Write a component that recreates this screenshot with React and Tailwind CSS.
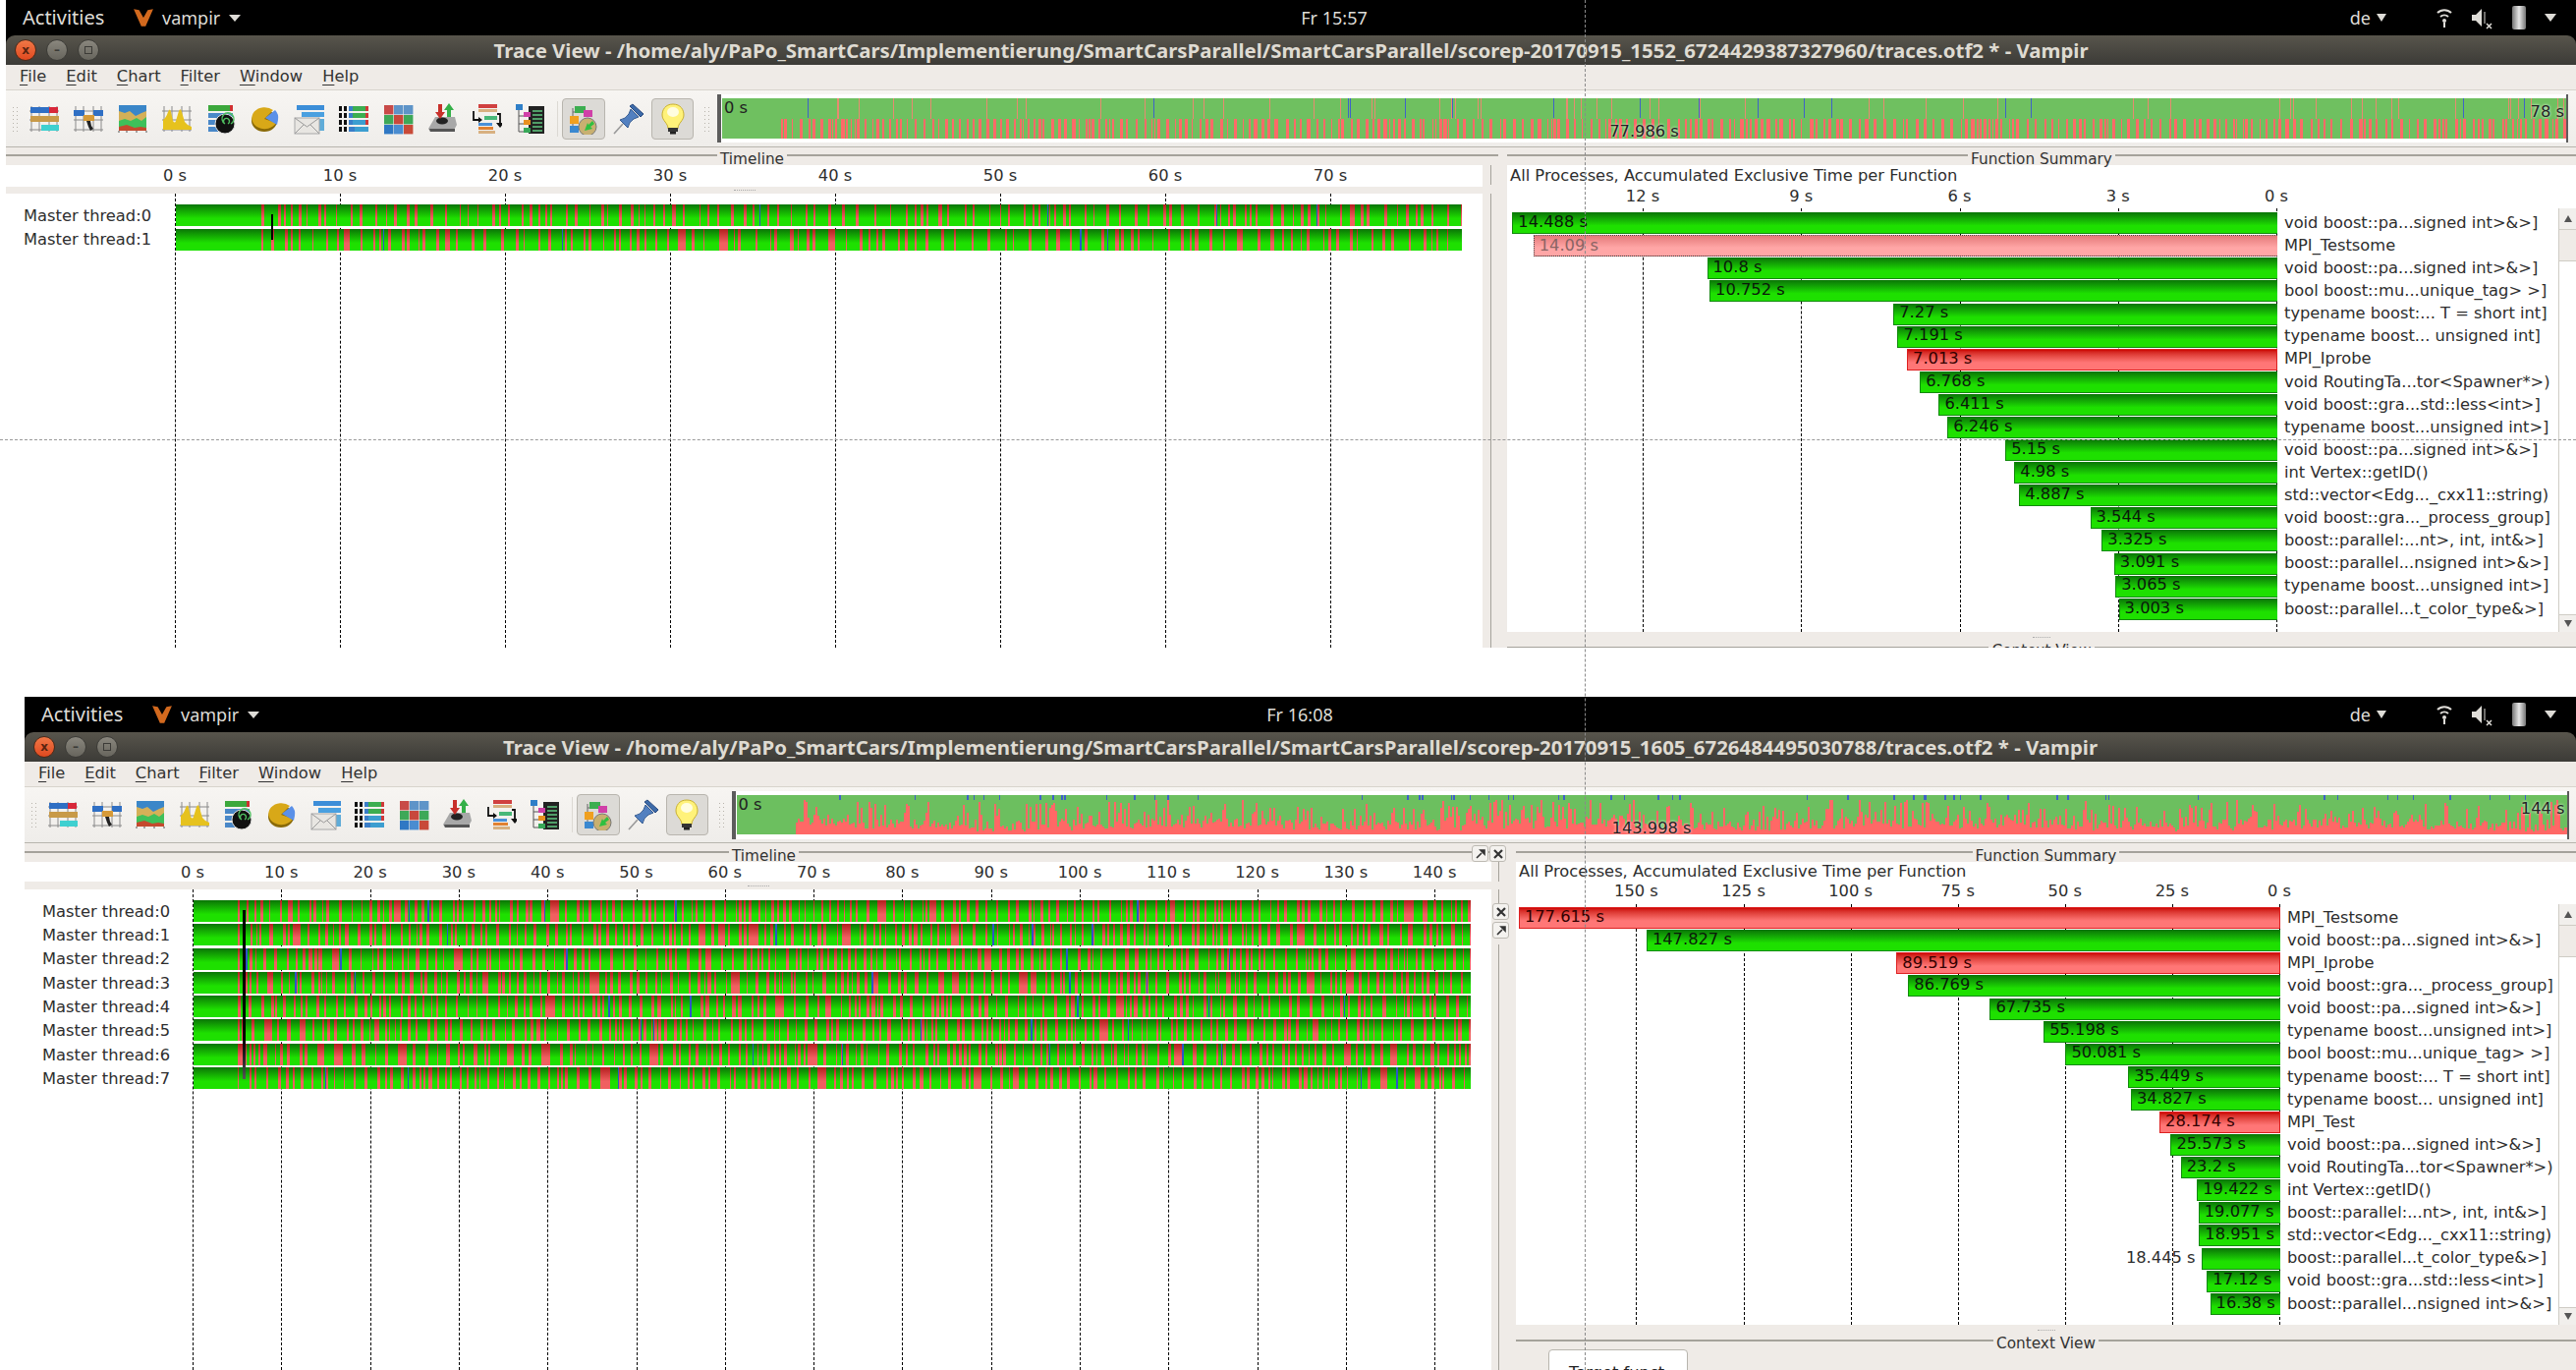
import React from "react";

const rng = (seed) => () => {
  seed = (seed + 0x6d2b79f5) | 0;
  let t = Math.imul(seed ^ (seed >>> 15), 1 | seed);
  t = (t + Math.imul(t ^ (t >>> 7), 61 | t)) ^ t;
  return ((t ^ (t >>> 14)) >>> 0) / 4294967296;
};

const ROWS1 = [
  [14.488, "g", "void boost::pa...signed int>&>]"],
  [14.09, "p", "MPI_Testsome"],
  [10.8, "g", "void boost::pa...signed int>&>]"],
  [10.752, "g", "bool boost::mu...unique_tag> >]"],
  [7.27, "g", "typename boost:... T = short int]"],
  [7.191, "g", "typename boost... unsigned int]"],
  [7.013, "r", "MPI_Iprobe"],
  [6.768, "g", "void RoutingTa...tor<Spawner*>)"],
  [6.411, "g", "void boost::gra...std::less<int>]"],
  [6.246, "g", "typename boost...unsigned int>]"],
  [5.15, "g", "void boost::pa...signed int>&>]"],
  [4.98, "g", "int Vertex::getID()"],
  [4.887, "g", "std::vector<Edg..._cxx11::string)"],
  [3.544, "g", "void boost::gra..._process_group]"],
  [3.325, "g", "boost::parallel:...nt>, int, int&>]"],
  [3.091, "g", "boost::parallel...nsigned int>&>]"],
  [3.065, "g", "typename boost...unsigned int>]"],
  [3.003, "g", "boost::parallel...t_color_type&>]"],
];
const ROWS2 = [
  [177.615, "r", "MPI_Testsome"],
  [147.827, "g", "void boost::pa...signed int>&>]"],
  [89.519, "r", "MPI_Iprobe"],
  [86.769, "g", "void boost::gra..._process_group]"],
  [67.735, "g", "void boost::pa...signed int>&>]"],
  [55.198, "g", "typename boost...unsigned int>]"],
  [50.081, "g", "bool boost::mu...unique_tag> >]"],
  [35.449, "g", "typename boost:... T = short int]"],
  [34.827, "g", "typename boost... unsigned int]"],
  [28.174, "r", "MPI_Test"],
  [25.573, "g", "void boost::pa...signed int>&>]"],
  [23.2, "g", "void RoutingTa...tor<Spawner*>)"],
  [19.422, "g", "int Vertex::getID()"],
  [19.077, "g", "boost::parallel:...nt>, int, int&>]"],
  [18.951, "g", "std::vector<Edg..._cxx11::string)"],
  [18.445, "o", "boost::parallel...t_color_type&>]"],
  [17.12, "g", "void boost::gra...std::less<int>]"],
  [16.38, "g", "boost::parallel...nsigned int>&>]"],
];

const BAR = {
  g: "bg-linear-to-b from-[#0a7506] via-[#1ee000] via-65% to-[#1ee000] border-l border-b border-[#128a0c] text-[#0a1a0a]",
  o: "bg-linear-to-b from-[#0a7506] via-[#1ee000] via-65% to-[#1ee000] border-l border-b border-[#128a0c]",
  r: "bg-linear-to-b from-[#cc0000] via-[#ff7676] via-65% to-[#ff7676] border border-[#dd2020] text-[#300]",
  p: "bg-linear-to-b from-[#e47a7a] via-[#ffa6a6] via-60% to-[#ffa6a6] border-y border-l border-dotted border-[#444] text-[#8a6464]",
};

function TimelineBar({ seed, width, start, dense, id }) {
  const r = rng(seed);
  const items = [];
  let x = start;
  while (x < width) {
    const big = r() < (dense ? 0.05 : 0.02);
    const w = big ? 4 + r() * 6 : 1.2 + r() * 2.2;
    items.push([x, w]);
    x += w + (dense ? 1.5 + r() * 9 : 2.5 + r() * 13);
  }
  const blues = [];
  for (let i = 0; i < width / (dense ? 280 : 380); i++) blues.push(start * 0.6 + r() * (width - start));
  return (
    <svg width={width} height="22" className="block" shapeRendering="crispEdges">
      <defs>
        <linearGradient id={`g${id}`} x1="0" y1="0" x2="0" y2="1">
          <stop offset="0" stopColor="#0a7506" />
          <stop offset="0.65" stopColor="#1ee000" />
          <stop offset="1" stopColor="#1ee000" />
        </linearGradient>
        <linearGradient id={`r${id}`} x1="0" y1="0" x2="0" y2="1">
          <stop offset="0" stopColor="#b41e1e" />
          <stop offset="0.65" stopColor="#f06060" />
          <stop offset="1" stopColor="#f06060" />
        </linearGradient>
      </defs>
      <rect width={width} height="22" fill={`url(#g${id})`} />
      {items.map(([a, w], i) => (
        <rect key={i} x={a} width={w} height="22" fill={`url(#r${id})`} />
      ))}
      {blues.map((a, i) => (
        <rect key={i} x={a} width="1.5" height="22" fill="#2d55c8" />
      ))}
    </svg>
  );
}

function OverviewOne() {
  const r = rng(77);
  const width = 1877;
  const low = [];
  let x = 60;
  while (x < width) {
    const w = 1 + r() * 2.6;
    low.push([x, w]);
    x += w + 1 + r() * 7;
  }
  const up = [];
  for (let i = 0; i < 60; i++) up.push(70 + r() * (width - 70));
  const blue = [];
  for (let i = 0; i < 16; i++) blue.push(60 + r() * (width - 70));
  return (
    <svg width={width} height="41" className="block" shapeRendering="crispEdges">
      <rect width={width} height="41" fill="#6fc060" />
      {low.map(([a, w], i) => (
        <rect key={i} x={a} y="21" width={w} height="20" fill="#ff6a68" />
      ))}
      {up.map((a, i) => (
        <rect key={i} x={a} y="0" width="1" height="21" fill="#e88a70" />
      ))}
      {blue.map((a, i) => (
        <rect key={i} x={a} y="0" width="1" height="20" fill="#3f62c8" />
      ))}
    </svg>
  );
}

function OverviewTwo() {
  const r = rng(5150);
  const width = 1863;
  const bars = [];
  for (let x = 60; x < width; x += 2) {
    const n = r();
    const h = 3 + r() * 11 + (n > 0.62 ? r() * 24 : 0) + (Math.sin(x / 61) + 1) * 1.5;
    bars.push([x, Math.min(h, 35)]);
  }
  const blue = [];
  for (let i = 0; i < 60; i++) blue.push(30 + r() * (width - 40));
  return (
    <svg width={width} height="40" className="block" shapeRendering="crispEdges">
      <rect width={width} height="40" fill="#6cbf5f" />
      {bars.map(([a, h], i) => (
        <rect key={i} x={a} y={40 - h} width="2" height={h} fill="#ff6866" />
      ))}
      {blue.map((a, i) => (
        <rect key={i} x={a} y="0" width="1.5" height="5" fill="#3e60c8" />
      ))}
    </svg>
  );
}

const Grid = () => (
  <g stroke="#8a8a8a" strokeWidth="1" fill="none">
    <path d="M3 3V29M11 3V29M21 3V29M29 3V29M1 27H31M1 8H31M1 17H31" />
  </g>
);
const ic = "w-[32px] h-[32px] shrink-0 blur-[0.4px]";

function Icon1() {
  return (
    <svg viewBox="0 0 32 32" className={ic}>
      <Grid />
      <rect x="2" y="4" width="22" height="6" fill="#2f6fc4" />
      <rect x="21" y="4" width="9" height="6" fill="#d8283a" />
      <rect x="2" y="13" width="29" height="6" fill="#c89a48" />
      <rect x="13" y="22" width="18" height="6" fill="#3fd0d0" />
    </svg>
  );
}
function Icon2() {
  return (
    <svg viewBox="0 0 32 32" className={ic}>
      <Grid />
      <rect x="1" y="7" width="11" height="6" fill="#2f6fc4" />
      <rect x="21" y="7" width="10" height="6" fill="#2f6fc4" />
      <rect x="11" y="12" width="11" height="6" fill="#d69a38" />
      <path d="M14 18l4 0 1 5 2 3-3 2-2-4z" fill="#222" />
    </svg>
  );
}
function Icon3() {
  return (
    <svg viewBox="0 0 32 32" className={ic}>
      <rect x="2" y="2" width="28" height="26" fill="#3a86c8" />
      <path d="M2 8l6 2 5-2 6 5 6-3 5-2v20H2z" fill="#d4b058" />
      <path d="M2 18l6-2 6 2 6-3 5 3 5-4v14H2z" fill="#3ec05a" />
      <path d="M2 24l8-2 8 3 6-1 6 1v3H2z" fill="#c44a2e" />
      <path d="M2 28v2M10 28v2M20 28v2M30 28v2" stroke="#555" />
    </svg>
  );
}
function Icon4() {
  return (
    <svg viewBox="0 0 32 32" className={ic}>
      <Grid />
      <path d="M2 27V17q3-2 5-8 2-5 3 0l2 9q2 3 3 0l3-10q2-4 3 1l3 10q3 4 7 5v3z" fill="#e6c21e" />
    </svg>
  );
}
function Icon5() {
  return (
    <svg viewBox="0 0 32 32" className={ic}>
      <rect x="3" y="2" width="25" height="6" fill="#3ca83c" />
      <rect x="25" y="2" width="3" height="6" fill="#d03030" />
      <rect x="3" y="10" width="25" height="5" fill="#4a88c8" />
      <rect x="3" y="17" width="12" height="5" fill="#4a88c8" />
      <rect x="3" y="24" width="10" height="5" fill="#4a88c8" />
      <circle cx="20" cy="21" r="10" fill="#111" stroke="#ddd" strokeWidth="1" />
      <path d="M20 21A6 6 0 1 1 26 21M20 21A3 3 0 1 1 23 21" stroke="#4fbf60" fill="none" strokeWidth="1.4" />
    </svg>
  );
}
function Icon6() {
  return (
    <svg viewBox="0 0 32 32" className={ic}>
      <ellipse cx="15" cy="18" rx="13" ry="11" fill="#8a6a08" />
      <path d="M15 16L24 7A13 11 0 1 0 27 20z" fill="#d8a818" />
      <path d="M16 15L26 7q4 4 3 10l-1 5z" fill="#5a90e8" />
    </svg>
  );
}
function Icon7() {
  return (
    <svg viewBox="0 0 32 32" className={ic}>
      <rect x="3" y="2" width="28" height="5" fill="#3c8ed8" />
      <rect x="8" y="9" width="23" height="5" fill="#4aa0e0" />
      <rect x="26" y="16" width="5" height="12" fill="#60acd8" />
      <rect x="1" y="15" width="25" height="16" fill="#e8e6e2" stroke="#a8a8a8" />
      <path d="M1 15l12.5 9L26 15M1 31l9-9M26 31l-9-9" stroke="#9a9a9a" fill="none" />
    </svg>
  );
}
function Icon8() {
  const R = [3, 10, 17, 24];
  return (
    <svg viewBox="0 0 32 32" className={ic}>
      {R.map((y, i) => (
        <g key={y}>
          <rect x="1" y={y} width="3" height="5" fill="#111" />
          <rect x="6" y={y} width="3" height="5" fill="#111" />
          <rect x="11" y={y} width="20" height="5" fill={i < 2 ? "#3cae50" : "#3c9ed0"} />
          <rect x="11" y={y} width={i === 3 ? 6 : 4} height="5" fill="#3a7ec8" />
          <rect x="28" y={y} width="3" height="5" fill={i === 3 ? "#3c9ed0" : "#d03838"} />
        </g>
      ))}
    </svg>
  );
}
function Icon9() {
  const C = ["#c84a48", "#5e94c8", "#5e94c8", "#3ea858", "#c8483c", "#3ea858", "#2f78c4", "#4a8cd0", "#c84a38"];
  return (
    <svg viewBox="0 0 32 32" className={ic}>
      {C.map((c, i) => (
        <rect key={i} x={2 + (i % 3) * 10} y={2 + Math.floor(i / 3) * 10} width="9.4" height="9.4" fill={c} />
      ))}
    </svg>
  );
}
function Icon10() {
  return (
    <svg viewBox="0 0 32 32" className={ic}>
      <path d="M2 26L9 14h20l2 8-4 7H4z" fill="#a8a8a8" />
      <path d="M3 26h26v3H4z" fill="#555" />
      <ellipse cx="16" cy="18" rx="6" ry="3.5" fill="#222" />
      <path d="M12 1h4v8h3l-5 7-5-7h3z" fill="#c8302a" />
      <path d="M21 14V7h-3l5-7 5 7h-3v7z" fill="#34b048" />
    </svg>
  );
}
function Icon11() {
  return (
    <svg viewBox="0 0 32 32" className={ic}>
      <rect x="8" y="1" width="19" height="4" fill="#d04040" />
      <rect x="8" y="6" width="19" height="3" fill="#d8b080" />
      <rect x="14" y="13" width="13" height="4" fill="#48b878" />
      <rect x="8" y="20" width="14" height="3" fill="#4a90d8" />
      <rect x="8" y="24" width="15" height="3" fill="#e08030" />
      <rect x="8" y="28" width="17" height="3" fill="#d8b080" />
      <path d="M3 8v9h6M27 11h3v10" stroke="#111" strokeWidth="1.8" fill="none" />
      <path d="M8 14l4 3-4 3zM26 20h8l-4 5z" fill="#111" />
    </svg>
  );
}
function Icon12() {
  return (
    <svg viewBox="0 0 32 32" className={ic}>
      <rect x="1" y="1" width="7" height="6" fill="#2f7fc8" />
      <path d="M4 7v22h8M4 13h8M4 21h8" stroke="#555" fill="none" />
      <rect x="14" y="3" width="16" height="28" fill="#222" />
      <rect x="9" y="9" width="7" height="5" fill="#d040a8" />
      <rect x="9" y="17" width="7" height="5" fill="#e89020" />
      <rect x="9" y="25" width="7" height="5" fill="#38a858" />
      <path d="M18 8h10M18 12h10M18 16h10M18 20h10M18 24h10M18 28h10" stroke="#60c880" strokeWidth="1.5" />
    </svg>
  );
}
function Icon13() {
  return (
    <svg viewBox="0 0 32 32" className={ic}>
      <path d="M5 5v24M5 9h8M5 18h3M5 27h3" stroke="#666" fill="none" />
      <rect x="7" y="3" width="11" height="7" fill="#3cae50" />
      <rect x="16" y="7" width="9" height="7" fill="#d040a8" />
      <rect x="2" y="13" width="9" height="8" fill="#f0a020" />
      <rect x="2" y="23" width="9" height="7" fill="#3a88d0" />
      <circle cx="20" cy="24" r="9" fill="#c8b070" stroke="#777" />
      <path d="M17 28l3-8 1 2 4-4 2 3-4 3 2 2z" fill="#2fc040" />
    </svg>
  );
}
function Icon14() {
  return (
    <svg viewBox="0 0 32 32" className={ic}>
      <path d="M1 31l9-10" stroke="#999" strokeWidth="1.6" />
      <path d="M7 17q6-1 9-6l2-5 8 8-5 2q-5 3-6 9z" fill="#5280c0" stroke="#345a90" />
      <path d="M17 3l11 11 3-3L20 1z" fill="#3c6aa8" stroke="#2c4c80" />
    </svg>
  );
}
function Icon15() {
  return (
    <svg viewBox="0 0 32 32" className={ic}>
      <path d="M16 1C8 1 5 7 5 12c0 6 6 8 6 14h10c0-6 6-8 6-14 0-5-3-11-11-11z" fill="#fff27a" stroke="#c8b030" />
      <ellipse cx="16" cy="9" rx="6" ry="5" fill="#fffde0" />
      <rect x="11" y="25" width="10" height="4" fill="#333" />
      <rect x="13" y="29" width="6" height="2.5" fill="#222" />
    </svg>
  );
}

const ICONS = [Icon1, Icon2, Icon3, Icon4, Icon5, Icon6, Icon7, Icon8, Icon9, Icon10, Icon11, Icon12];

function Grip() {
  return (
    <svg width="8" height="26" className="shrink-0">
      {[0, 1, 2, 3, 4, 5, 6].map((i) => (
        <g key={i} fill="#b8b4ac">
          <rect x="0" y={1 + i * 4} width="1" height="1" />
          <rect x="4" y={1 + i * 4} width="1" height="1" />
        </g>
      ))}
    </svg>
  );
}

function Menu() {
  return (
    <div className="h-[26px] bg-[#efebe7] border-b border-[#d8d4cd] flex items-center gap-5 pl-[14px] text-[16.3px] text-[#333]">
      {["File", "Edit", "Chart", "Filter", "Window", "Help"].map((m) => (
        <span key={m}>
          <u className="underline-offset-[3px]">{m[0]}</u>
          {m.slice(1)}
        </span>
      ))}
    </div>
  );
}

function TopBar({ leftW, clock }) {
  return (
    <div className="h-[36px] bg-black flex items-center text-[#dedcd7] text-[18px] font-['Noto_Sans',sans-serif]">
      <div style={{ width: leftW }} className="pl-[17px] flex items-center shrink-0">
        <span className="w-[112px] text-[20px]">Activities</span>
        <svg width="22" height="22" viewBox="0 0 20 20" className="shrink-0">
          <path d="M1 2l5 1 4 7 4-7 5-1-7 16h-4z" fill="#d2691e" />
        </svg>
        <span className="ml-[8px]">vampir</span>
        <span className="ml-[9px] w-0 h-0 border-x-[6px] border-x-transparent border-t-[7px] border-t-[#dedcd7]" />
      </div>
      <span className="w-[100px] text-center shrink-0">{clock}</span>
      <div className="ml-auto flex items-center pr-[20px]">
        <span>de</span>
        <span className="ml-[6px] w-0 h-0 border-x-[5px] border-x-transparent border-t-[8px] border-t-[#dedcd7]" />
        <svg width="24" height="24" viewBox="0 0 24 24" className="ml-[47px]" fill="none" stroke="#dedcd7" strokeWidth="2">
          <path d="M5 7a10 10 0 0 1 14 0M8 11a6 6 0 0 1 8 0" />
          <circle cx="12" cy="15" r="2" fill="#dedcd7" stroke="none" />
          <path d="M12 17v5" />
        </svg>
        <svg width="24" height="24" viewBox="0 0 24 24" className="ml-[13px]" fill="#dedcd7">
          <path d="M3 9h4l6-6v18l-6-6H3z" />
          <path d="M16 6v12" stroke="#dedcd7" />
          <path d="M18 18l5 5M23 18l-5 5" stroke="#dedcd7" strokeWidth="1.5" />
        </svg>
        <span className="ml-[20px] w-[14px] h-[24px] bg-linear-to-r from-[#777] via-[#e8e8e8] to-[#777] rounded-[2px]" />
        <span className="ml-[19px] w-0 h-0 border-x-[6px] border-x-transparent border-t-[8px] border-t-[#dedcd7]" />
      </div>
    </div>
  );
}

function TitleBar({ title }) {
  return (
    <div className="bg-black">
      <div className="h-[30px] rounded-t-[9px] bg-linear-to-b from-[#58554c] to-[#3c3b37] flex items-center relative">
        <div className="absolute left-[9px] top-[4px] flex gap-[10px]">
          <span className="w-[22px] h-[22px] rounded-full bg-linear-to-b from-[#f07746] to-[#e0481e] border border-[#4a2a1a] flex items-center justify-center text-[12px] leading-none text-[#5a2410] font-bold">x</span>
          <span className="w-[22px] h-[22px] rounded-full bg-linear-to-b from-[#8a877e] to-[#67655d] border border-[#3c3b37] flex items-center justify-center text-[12px] leading-none text-[#3c3b37] font-bold">–</span>
          <span className="w-[22px] h-[22px] rounded-full bg-linear-to-b from-[#8a877e] to-[#67655d] border border-[#3c3b37] flex items-center justify-center">
            <span className="w-[8px] h-[8px] border border-[#3c3b37]" />
          </span>
        </div>
        <span className="mx-auto text-[#dfdbd2] text-[20.4px] font-bold whitespace-nowrap font-['Noto_Sans',sans-serif]">{title}</span>
      </div>
    </div>
  );
}

function Toolbar({ h, iconGap, children }) {
  return (
    <div className={`${h} bg-linear-to-b from-[#f7f5f2] to-[#efedea] border-b border-[#b8b5ae] flex items-center`}>
      <div className="ml-[7px]"><Grip /></div>
      <div className={`ml-[8px] flex items-center ${iconGap}`}>
        {ICONS.map((I, i) => <I key={i} />)}
      </div>
      <span className="ml-[11px] w-px h-[36px] bg-[#dcd9d3]" />
      <span className="ml-[4px] w-[44px] h-[42px] rounded-[4px] bg-[#dcdad6] border border-[#b8b5ae] flex items-center justify-center"><Icon13 /></span>
      <span className="ml-[8px]"><Icon14 /></span>
      <span className="ml-[7px] w-[43px] h-[42px] rounded-[4px] bg-[#dcdad6] border border-[#b8b5ae] flex items-center justify-center"><Icon15 /></span>
      <span className="ml-[11px]"><Grip /></span>
      <div className="ml-[5px] flex items-center h-[49px] border-l-[4px] border-r-[2px] border-[#5c5c5c] bg-white">
        {children}
      </div>
    </div>
  );
}

function DockTitle({ children, className = "" }) {
  return (
    <div className={`h-[18px] shrink-0 flex items-center bg-[#efebe7] text-[15.3px] text-[#333] ${className}`}>
      <span className="flex-1 h-[2px] bg-[#a5a29b] -translate-y-[1px]" />
      <span className="px-[3px] leading-[18px] translate-y-[3px] relative z-10">{children}</span>
      <span className="flex-1 h-[2px] bg-[#a5a29b] -translate-y-[1px]" />
    </div>
  );
}

function VDash({ left, className = "" }) {
  return <span style={{ left }} className={`absolute top-0 bottom-0 border-l border-dashed border-black ${className}`} />;
}

function Timeline({ threads, tickStep, ticks, plotX, barW, axisH, stripH, pitchGap, seedBase, startX, dense, cursor }) {
  return (
    <div className="flex flex-col h-full">
      <div className={`${axisH} bg-white relative shrink-0 text-[16.3px] text-[#2e2e2e]`}>
        {ticks.map((t, i) => (
          <span key={t} style={{ left: plotX + i * tickStep }} className="absolute -translate-x-1/2 top-0 whitespace-nowrap leading-[22px]">{t} s</span>
        ))}
      </div>
      <div className={`${stripH} bg-[#efebe7] shrink-0 flex justify-center items-center`}>
        <span className="w-[22px] border-t border-dotted border-[#aaa]" />
      </div>
      <div className="flex-1 bg-white relative pt-[11px] overflow-hidden">
        {ticks.map((t, i) => (
          <VDash key={t} left={plotX + i * tickStep} />
        ))}
        <div className={`flex flex-col relative ${pitchGap}`}>
          {threads.map((n, i) => (
            <div key={n} className="flex items-center h-[22px]">
              <span style={{ width: plotX + 1 }} className="pl-[18px] pt-[2px] text-[16.3px] text-[#2e2e2e] whitespace-nowrap shrink-0">Master thread:{n}</span>
              <TimelineBar id={`${seedBase}${i}`} seed={seedBase * 31 + i * 97} width={barW} start={startX} dense={dense} />
            </div>
          ))}
        </div>
        {cursor}
      </div>
    </div>
  );
}

function Scroll() {
  return (
    <div className="w-[18px] shrink-0 flex flex-col bg-white border-l border-[#cfccc5]">
      <div className="h-[22px] bg-[#f1efec] border-b border-[#cfccc5] flex items-center justify-center">
        <span className="w-0 h-0 border-x-[4px] border-x-transparent border-b-[7px] border-b-[#555]" />
      </div>
      <div className="h-[32px] bg-[#efebe7] border-b border-[#cfccc5]" />
      <div className="flex-1 bg-white" />
      <div className="h-[18px] bg-[#f1efec] border-t border-[#cfccc5] flex items-center justify-center">
        <span className="w-0 h-0 border-x-[4px] border-x-transparent border-t-[7px] border-t-[#555]" />
      </div>
    </div>
  );
}

function FnSummary({ rows, scale, zero, labels, titleH, axisH, chartPad, contextH, tab }) {
  return (
    <div className="flex flex-col h-full">
      <div className="flex-1 bg-white flex flex-col min-h-0">
        <div className={`${titleH} shrink-0 pl-[3px] text-[16.3px] text-[#2e2e2e] flex items-center whitespace-nowrap`}>All Processes, Accumulated Exclusive Time per Function</div>
        <div className={`${axisH} shrink-0 relative text-[16.3px] text-[#2e2e2e]`}>
          {labels.map(([v, t]) => (
            <span key={t} style={{ left: zero - v * scale }} className="absolute -translate-x-1/2 whitespace-nowrap leading-[20px]">{t}</span>
          ))}
        </div>
        <div className="flex-1 flex min-h-0">
          <div className={`flex-1 relative ${chartPad}`}>
            {labels.map(([v, t]) => (
              <VDash key={t} left={zero - v * scale} />
            ))}
            {rows.map(([v, kind, name]) => (
              <div key={name + v} className="h-[23.1px] flex items-center relative text-[16.3px]">
                <div style={{ width: zero + 1 }} className="flex justify-end items-center shrink-0">
                  {kind === "o" && <span className="mr-[6px] text-[#2e2e2e] whitespace-nowrap">{v} s</span>}
                  <div style={{ width: v * scale }} className={`h-[22px] flex items-center pl-[5px] pb-[1px] whitespace-nowrap ${BAR[kind]}`}>
                    {kind === "o" ? "" : `${v} s`}
                  </div>
                </div>
                <span className="ml-[7px] text-[#2e2e2e] whitespace-nowrap">{name}</span>
              </div>
            ))}
          </div>
          <Scroll />
        </div>
      </div>
      <div className={`${contextH} shrink-0 bg-[#efebe7] flex flex-col overflow-hidden`}>
        <div className="h-[6px] flex justify-center items-center shrink-0 mt-[2px]">
          <span className="w-[18px] border-t border-dotted border-[#aaa]" />
        </div>
        <div className="mt-[7px] shrink-0 flex items-center text-[15.3px] text-[#333] h-[2px]">
          <span className="flex-1 h-[2px] bg-[#a5a29b]" />
          <span className="px-[3px] leading-[18px] translate-y-[3px] bg-[#efebe7]">Context View</span>
          <span className="flex-1 h-[2px] bg-[#a5a29b]" />
        </div>
        {tab}
      </div>
    </div>
  );
}

function FloatBtn({ kind, className = "" }) {
  return (
    <span className={`w-[17px] h-[17px] rounded-[3px] bg-[#f4f2ef] border border-[#bdbab3] flex items-center justify-center ${className}`}>
      <svg width="12" height="12" viewBox="0 0 12 12" stroke="#333" strokeWidth="2.2" fill="#333">
        {kind === "x" ? <path d="M2 2l8 8M10 2l-8 8" fill="none" /> : <path d="M2 10l5-5M6 2h4v4z" strokeWidth="1.6" />}
      </svg>
    </span>
  );
}

function Window1() {
  const ticks = [0, 10, 20, 30, 40, 50, 60, 70];
  return (
    <div className="ml-[6px] h-[659px] overflow-hidden flex flex-col">
      <TopBar leftW={1302} clock="Fr 15:57" />
      <TitleBar title="Trace View - /home/aly/PaPo_SmartCars/Implementierung/SmartCarsParallel/SmartCarsParallel/scorep-20170915_1552_6724429387327960/traces.otf2 * - Vampir" />
      <Menu />
      <Toolbar h="h-[58px]" iconGap="gap-[13px]">
        <div className="relative ml-px h-[41px]">
          <OverviewOne />
          <span className="absolute left-[2px] top-[-2px] text-[16.3px] text-[#222]">0 s</span>
          <span className="absolute right-[2px] top-[2px] text-[16.3px] text-[#222] [text-shadow:0_0_3px_#fff]">78 s</span>
          <span className="absolute left-1/2 -translate-x-1/2 top-[22px] text-[16.3px] text-[#222] whitespace-nowrap [text-shadow:0_0_3px_#fff]">77.986 s</span>
        </div>
      </Toolbar>
      <div className="flex flex-1 min-h-0">
        <div className="w-[1528px] shrink-0 flex flex-col">
          <DockTitle className="pr-[9px]">Timeline</DockTitle>
          <div className="flex-1 flex min-h-0 bg-[#efebe7]">
            <div className="w-[1503px] shrink-0">
              <Timeline threads={[0, 1]} ticks={ticks} tickStep={168} plotX={172} barW={1309} axisH="h-[22px]" stripH="h-[7px]" pitchGap="gap-[2.6px]" seedBase={11} startX={87} dense={false}
                cursor={<span className="absolute left-[270px] top-[21px] w-[2px] h-[26px] bg-black" />} />
            </div>
            <div className="ml-[8px] flex flex-col w-px">
              <span className="h-[20px] bg-[#a5a29b]" />
              <span className="h-[9px]" />
              <span className="flex-1 bg-[#a5a29b]" />
            </div>
          </div>
        </div>
        <div className="flex-1 flex flex-col min-w-0">
          <DockTitle>Function Summary</DockTitle>
          <div className="flex-1 min-h-0">
            <FnSummary rows={ROWS1} scale={53.75} zero={783} labels={[[12, "12 s"], [9, "9 s"], [6, "6 s"], [3, "3 s"], [0, "0 s"]]} titleH="h-[22px]" axisH="h-[22px]" chartPad="pt-[3.6px]" contextH="h-[16px]" />
          </div>
        </div>
      </div>
    </div>
  );
}

function Window2() {
  const ticks = [0, 10, 20, 30, 40, 50, 60, 70, 80, 90, 100, 110, 120, 130, 140];
  return (
    <div className="ml-[25px] mt-[50px] h-[685px] overflow-hidden flex flex-col">
      <TopBar leftW={1248} clock="Fr 16:08" />
      <TitleBar title="Trace View - /home/aly/PaPo_SmartCars/Implementierung/SmartCarsParallel/SmartCarsParallel/scorep-20170915_1605_6726484495030788/traces.otf2 * - Vampir" />
      <Menu />
      <Toolbar h="h-[57px]" iconGap="gap-[12.6px]">
        <div className="relative ml-px h-[40px]">
          <OverviewTwo />
          <span className="absolute left-[2px] top-[-2px] text-[16.3px] text-[#222]">0 s</span>
          <span className="absolute right-[2px] top-[2px] text-[16.3px] text-[#222] [text-shadow:0_0_3px_#fff]">144 s</span>
          <span className="absolute left-1/2 -translate-x-1/2 top-[22px] text-[16.3px] text-[#222] whitespace-nowrap [text-shadow:0_0_3px_#fff]">143.998 s</span>
        </div>
      </Toolbar>
      <div className="flex flex-1 min-h-0">
        <div className="w-[1518px] shrink-0 flex flex-col relative">
          <DockTitle className="h-[19px] pr-[13px]">Timeline</DockTitle>
          <div className="absolute right-[10px] top-[2px] flex gap-[1px] z-20">
            <FloatBtn kind="p" />
            <FloatBtn kind="x" />
          </div>
          <div className="flex-1 flex min-h-0 bg-[#efebe7]">
            <div className="w-[1493px] shrink-0">
              <Timeline threads={[0, 1, 2, 3, 4, 5, 6, 7]} ticks={ticks} tickStep={90.3} plotX={171} barW={1300} axisH="h-[20px]" stripH="h-[8px]" pitchGap="gap-[2.3px]" seedBase={23} startX={45} dense={true}
                cursor={<span className="absolute left-[222px] top-[21px] w-[3px] h-[172px] bg-linear-to-b from-black via-black via-70% to-[#555]" />} />
            </div>
            <div className="relative w-[25px] flex flex-col items-center pr-[10px]">
              <span className="h-[20px] w-px bg-[#a5a29b]" />
              <span className="h-[8px]" />
              <span className="h-[14px] w-px bg-[#a5a29b]" />
              <span className="h-[42px]" />
              <span className="flex-1 w-px bg-[#a5a29b]" />
              <div className="absolute left-[1px] top-[42px] flex flex-col gap-[2px]">
                <FloatBtn kind="x" />
                <FloatBtn kind="p" />
              </div>
            </div>
          </div>
        </div>
        <div className="flex-1 flex flex-col min-w-0">
          <DockTitle className="h-[19px]">Function Summary</DockTitle>
          <div className="flex-1 min-h-0">
            <FnSummary rows={ROWS2} scale={4.364} zero={777} labels={[[150, "150 s"], [125, "125 s"], [100, "100 s"], [75, "75 s"], [50, "50 s"], [25, "25 s"], [0, "0 s"]]} titleH="h-[20px]" axisH="h-[23px]" chartPad="pt-[2.6px]" contextH="h-[46px]"
              tab={
                <div className="ml-[33px] mt-[8px] w-[142px] h-[40px] shrink-0 bg-white border border-[#b8b5ae] rounded-t-[4px] pl-[20px] pt-[11px] text-[16.3px] text-[#222] whitespace-nowrap overflow-hidden">Target funct</div>
              } />
          </div>
        </div>
      </div>
    </div>
  );
}

export default function App() {
  return (
    <div className="relative w-[2622px] h-[1394px] overflow-hidden bg-white font-['DejaVu_Sans',sans-serif]">
      <Window1 />
      <Window2 />
      <span className="absolute left-[1613px] top-0 bottom-0 border-l border-dashed border-[#8a8a8a] z-30" />
      <span className="absolute left-0 right-0 top-[447px] border-t border-dashed border-[#999] z-30" />
    </div>
  );
}
